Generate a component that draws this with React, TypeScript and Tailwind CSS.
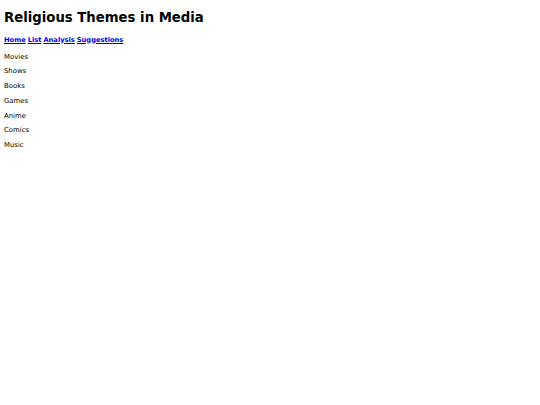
export default function App() {
  const items = ['Movies', 'Shows', 'Books', 'Games', 'Anime', 'Comics', 'Music']
  return (
    <div className="min-h-[405px] bg-white pl-[4px] font-['DejaVu_Sans',sans-serif] text-black">
      <h1 className="pt-[9.5px] text-[13.25px] font-bold leading-[16px]">Religious Themes in Media</h1>
      <nav className="mt-[10px] flex gap-[2px] text-[6.7px] font-bold leading-[8px]">
        <a href="#" className="text-[#0000ee] underline">Home</a>
        <a href="#" className="text-[#0000ee] underline">List</a>
        <a href="#" className="text-[#0000ee] underline">Analysis</a>
        <a href="#" className="text-[#0000ee] underline">Suggestions</a>
      </nav>
      <ul className="mt-[6.2px] flex flex-col text-[6.9px] leading-[14.7px]">
        {items.map((item) => (
          <li key={item}>{item}</li>
        ))}
      </ul>
    </div>
  )
}
